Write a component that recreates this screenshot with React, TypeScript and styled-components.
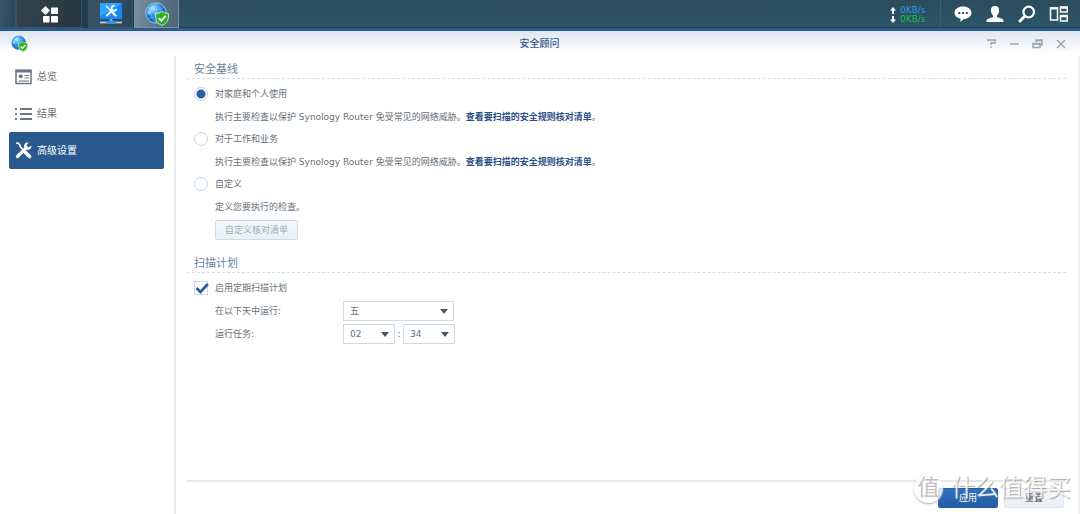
import React from "react";
import styled, { createGlobalStyle } from "styled-components";

const Global = createGlobalStyle`
  * { box-sizing: border-box; }
  body {
    margin: 0;
    background: #fff;
    color: #66707a;
    font: 9px/12px "DejaVu Sans", "Noto Sans CJK SC", sans-serif;
  }
  button, select, input { font: inherit; color: inherit; margin: 0; }
`;

const Page = styled.div`
  display: flex;
  flex-direction: column;
  min-height: 100vh;
  position: relative;
`;

const Taskbar = styled.nav`
  display: flex;
  height: 31px;
  padding: 0 11px 0 0;
  background: linear-gradient(#2b4c5c, #2c5566 90%, #1f3f52);
  border-bottom: 3px solid #2b5a90;
`;

const TaskButton = styled.button<{ $width: number; $tone?: "dark" | "active" }>`
  display: flex;
  align-items: center;
  justify-content: center;
  width: ${(p) => p.$width}px;
  height: 28px;
  padding: 1px 0 0;
  border: 1px solid ${(p) => (p.$tone === "active" ? "#7890a0" : "#3a5362")};
  border-top: 0;
  background: ${(p) =>
    p.$tone === "active"
      ? "linear-gradient(100deg, #7890a0, #5a7382 60%, #4b6575)"
      : p.$tone === "dark"
      ? "linear-gradient(100deg, #33444f, #263640)"
      : "linear-gradient(100deg, #3c5566, #27475a)"};
`;

const TaskGap = styled.span<{ $width: number }>`
  width: ${(p) => p.$width}px;
  background: #213c4b;
`;

const Spacer = styled.span`
  flex: 1;
`;

const Speed = styled.div`
  display: grid;
  grid-template-columns: 10px 28px;
  grid-template-rows: 9px 9px;
  align-content: center;
  align-items: center;
  width: 50px;
  height: 29px;
  line-height: 9px;
  font-size: 9px;
`;

const Rate = styled.span<{ $color: string }>`
  color: ${(p) => p.$color};
`;

const Tray = styled.div`
  display: flex;
  align-items: center;
  gap: 12px;
  height: 28px;
  padding-left: 12px;
  border-left: 1px solid #3a6070;
`;

const IconButton = styled.button<{ $size: number }>`
  display: flex;
  align-items: center;
  justify-content: center;
  width: ${(p) => p.$size}px;
  height: ${(p) => p.$size}px;
  padding: 0;
  border: 0;
  background: none;
`;

const TitleBar = styled.header`
  display: grid;
  grid-template-columns: 100px 1fr 100px;
  align-items: center;
  height: 25px;
  padding: 0 12px 0 11px;
  background: linear-gradient(#dfe6ef, #fff 90%);
`;

const Title = styled.h1`
  margin: 0;
  text-align: center;
  font-size: 10px;
  line-height: 14px;
  font-weight: 500;
  color: #35558a;
`;

const WindowControls = styled.div`
  display: flex;
  justify-content: flex-end;
  gap: 9px;
`;

const Body = styled.div`
  display: flex;
  flex: 1;
  border-right: 2px solid #f0f1f2;
`;

const Sidebar = styled.aside`
  display: flex;
  flex-direction: column;
  width: 176px;
  padding: 2px 10px 0 9px;
  border-right: 2px solid #e9eaeb;
`;

const NavItem = styled.button<{ $active?: boolean }>`
  display: flex;
  align-items: center;
  gap: 5px;
  height: 37px;
  padding: 0 6px;
  border: 0;
  border-radius: 2px;
  background: ${(p) => (p.$active ? "#29598f" : "none")};
  color: ${(p) => (p.$active ? "#fff" : "#66707a")};
  font-size: 10px;
  line-height: 14px;
`;

const Main = styled.main`
  display: flex;
  flex: 1;
  flex-direction: column;
  padding: 3px 12px 0 11px;
`;

const Heading = styled.h2`
  height: 20px;
  margin: 0 0 4px;
  padding-left: 7px;
  border-bottom: 1px dashed #d6dde4;
  color: #6683a0;
  font-size: 11px;
  line-height: 21px;
  font-weight: 400;
`;

const Section = styled.section`
  margin-bottom: 13px;
`;

const Option = styled.label`
  display: flex;
  align-items: center;
  gap: 7px;
  height: 22px;
  padding-left: 7px;
`;

const Radio = styled.input`
  appearance: none;
  width: 14px;
  height: 14px;
  border: 1px solid #c5d3e0;
  border-radius: 50%;
  background: #fff;
  &:checked {
    background: radial-gradient(circle, #2b5fa3 0 4px, #fff 5px);
  }
`;

const CheckWrap = styled.span`
  position: relative;
  display: flex;
  svg {
    position: absolute;
    left: 1px;
    top: 1px;
    pointer-events: none;
  }
`;

const Checkbox = styled.input`
  appearance: none;
  width: 14px;
  height: 14px;
  border: 1px solid #c9d6e4;
  background: #fff;
`;

const Description = styled.p`
  height: 23px;
  margin: 0;
  padding-left: 28px;
  line-height: 25px;
`;

const RuleLink = styled.a`
  color: #2c4f87;
  font-weight: bold;
  text-decoration: none;
`;

const Button = styled.button<{ $kind?: "primary" | "disabled" }>`
  height: 20px;
  min-width: 60px;
  padding: 0 9px;
  border: 1px solid ${(p) => (p.$kind === "primary" ? "#2562aa" : p.$kind === "disabled" ? "#cfdce8" : "#e0e6ec")};
  border-radius: 2px;
  background: ${(p) => (p.$kind === "primary" ? "linear-gradient(#2e70bd, #235ca5)" : "linear-gradient(#f5f8fb, #e9eff4)")};
  color: ${(p) => (p.$kind === "primary" ? "#fff" : p.$kind === "disabled" ? "#a3acb5" : "#414f5d")};
  line-height: 12px;
`;

const ChecklistRow = styled.div`
  padding: 2px 0 0 28px;
`;

const Field = styled.div`
  display: grid;
  grid-template-columns: 128px 1fr;
  align-items: center;
  height: 23px;
  padding-left: 28px;
`;

const Time = styled.div`
  display: flex;
  align-items: center;
`;

const Colon = styled.span`
  width: 8px;
  text-align: center;
`;

const SelectWrap = styled.span<{ $width: number }>`
  position: relative;
  width: ${(p) => p.$width}px;
  height: 20px;
  svg {
    position: absolute;
    right: 6px;
    top: 8px;
    pointer-events: none;
  }
`;

const Select = styled.select`
  appearance: none;
  display: block;
  width: 100%;
  height: 20px;
  padding: 0 6px;
  border: 1px solid #cfdae5;
  border-radius: 0;
  background: #fff;
`;

const Footer = styled.footer`
  display: flex;
  justify-content: flex-end;
  gap: 6px;
  height: 34px;
  margin-top: auto;
  padding: 6px 2px 0 0;
  border-top: 2px solid #e6e7e8;
`;

const Watermark = styled.div`
  position: absolute;
  right: 9px;
  bottom: 9px;
  display: flex;
  align-items: center;
  gap: 8px;
  color: rgba(255, 255, 255, 0.85);
  font-size: 24px;
  line-height: 34px;
  text-shadow: 1px 1px 1px rgba(110, 110, 110, 0.6);
  pointer-events: none;
`;

const WatermarkSeal = styled.span`
  width: 29px;
  height: 29px;
  border-radius: 50%;
  background: rgba(255, 255, 255, 0.8);
  box-shadow: 0 1px 2px #aaa;
  color: #c2c2c2;
  font-size: 22px;
  line-height: 28px;
  text-align: center;
  text-shadow: none;
`;

const Globe = ({ size, id }: { size: number; id: string }) => (
  <svg width={size} height={size} viewBox="0 0 24 24" aria-hidden="true">
    <defs>
      <radialGradient id={id} cx="40%" cy="30%">
        <stop offset="0" stopColor="#8ed7ff" />
        <stop offset="0.6" stopColor="#2f92ef" />
        <stop offset="1" stopColor="#176cd0" />
      </radialGradient>
    </defs>
    <circle cx="11" cy="11" r="10.3" fill={`url(#${id})`} stroke="#b9e0fa" strokeWidth="0.7" />
    <path d="M1 11h20M3 5.500q8 4 16 0M3 17q8-4 16 0M11 1v20M11 1Q1 11 11 21M11 1q10 10 0 20" fill="none" stroke="#a5dbff" strokeWidth="0.5" opacity="0.7" />
    <path d="M4 6l4-3 3 2-2 3-3 1-1 4-3-2z" fill="#bce6ff" opacity="0.6" />
    <path d="M17 9.500q3 2 6.400 2v4q-.5 5.500-6.400 8-6-2.500-6.400-8v-4q3.400 0 6.400-2z" fill="#28b51c" stroke="#e5f5df" strokeWidth="0.800" />
    <path d="M13.700 16.200l2.500 2.500 4.500-4.800" fill="none" stroke="#fff" strokeWidth="1.900" />
  </svg>
);

const Tools = ({ size }: { size: number }) => (
  <svg width={size} height={size} viewBox="0 0 17 17" aria-hidden="true">
    <path d="M2.500 14.500L11 6" stroke="#fff" strokeWidth="3.200" strokeLinecap="round" />
    <path d="M16.200 3.500l-2.700 2-2-2 2-2.800C10.500 0 8.500 2.500 9.300 5.200L11.800 7.700c2.700.8 5-1.400 4.400-4.200z" fill="#fff" />
    <path d="M1 1.500L3 1l2 2v1.500l3 3" fill="none" stroke="#fff" strokeWidth="1.700" />
    <path d="M10.500 10.500l4 4" stroke="#fff" strokeWidth="3.600" strokeLinecap="round" />
  </svg>
);

const Arrow = ({ down }: { down?: boolean }) => (
  <svg width="6" height="7" viewBox="0 0 6 7" aria-hidden="true">
    <path d={down ? "M3 7L0 3.500h2V0h2v3.500h2z" : "M3 0L0 3.500h2V7h2V3.500h2z"} fill="#fff" />
  </svg>
);

const Caret = () => (
  <svg width="8" height="5" viewBox="0 0 8 5" aria-hidden="true">
    <path d="M0 0h8L4 5z" fill="#4c5965" />
  </svg>
);

const Dropdown = ({ label, options, width }: { label: string; options: string[]; width: number }) => (
  <SelectWrap $width={width}>
    <Select aria-label={label}>
      {options.map((o) => (
        <option key={o}>{o}</option>
      ))}
    </Select>
    <Caret />
  </SelectWrap>
);

const baselines = ["对家庭和个人使用", "对于工作和业务"];

export default function App() {
  return (
    <Page>
      <Global />
      <Taskbar>
        <TaskButton $width={16} aria-label="显示桌面" />
        <TaskButton $width={66} $tone="dark" aria-label="主菜单">
          <svg width="17" height="17" viewBox="0 0 17 17" fill="#fff" aria-hidden="true">
            <path d="M4.500 0l4.500 4.500-4.500 4.500L0 4.500z" />
            <rect x="10" y="1.500" width="7" height="6.500" rx="0.700" />
            <rect x="2" y="10" width="6.500" height="6.500" rx="0.700" />
            <rect x="10" y="10" width="7" height="6.500" rx="0.700" />
          </svg>
        </TaskButton>
        <TaskGap $width={6} />
        <TaskButton $width={45} aria-label="控制面板">
          <svg width="22" height="22" viewBox="0 0 22 22" aria-hidden="true">
            <rect x="0" y="0" width="22" height="16" rx="0.500" fill="#1689f2" />
            <path d="M0 0h22L0 14z" fill="#33a4ff" />
            <g fill="none" stroke="#fff">
              <path d="M7 12.500l5.500-5.500" strokeWidth="2" strokeLinecap="round" />
              <path d="M14.500 2.800a2.500 2.500 0 1 0 2 3" strokeWidth="1.700" />
              <path d="M6 3l5 5" strokeWidth="1.200" />
              <path d="M12.500 9.500l3 3" strokeWidth="2.300" strokeLinecap="round" />
            </g>
            <path d="M11 16v3" stroke="#9aa8b2" strokeWidth="3" />
            <path d="M0 19.500h22" stroke="#c8ced2" strokeWidth="1.700" />
            <rect x="6" y="18" width="10" height="3" rx="1" fill="#2497ee" />
          </svg>
        </TaskButton>
        <TaskGap $width={1} />
        <TaskButton $width={45} $tone="active" aria-label="安全顾问">
          <Globe size={24} id="globe-task" />
        </TaskButton>
        <Spacer />
        <Speed>
          <Arrow />
          <Rate $color="#2e9be2">0KB/s</Rate>
          <Arrow down />
          <Rate $color="#20bd50">0KB/s</Rate>
        </Speed>
        <Tray>
          <IconButton $size={20} aria-label="通知">
            <svg width="18" height="18" viewBox="0 0 18 18" aria-hidden="true">
              <path d="M9 1.500c4.700 0 8.500 2.700 8.500 6.300S13.700 14 9.800 14.100L6.500 17v-3.300C3 13 .5 10.700.5 7.800.5 4.200 4.300 1.500 9 1.500z" fill="#fff" />
              <path d="M4.300 7h2v2h-2zM8 7h2v2H8zM11.700 7h2v2h-2z" fill="#315665" />
            </svg>
          </IconButton>
          <IconButton $size={20} aria-label="用户">
            <svg width="18" height="18" viewBox="0 0 18 18" aria-hidden="true">
              <path d="M9 1c3 0 4.300 2 4.100 4.500C13 8 12 9.500 11 10.500V12l5.500 2c.8.500 1 1.500 1 3H.5c0-1.500.2-2.500 1-3L7 12v-1.500C6 9.500 5 8 4.900 5.500 4.700 3 6 1 9 1z" fill="#fff" />
            </svg>
          </IconButton>
          <IconButton $size={20} aria-label="搜索">
            <svg width="18" height="18" viewBox="0 0 18 18" fill="none" stroke="#fff" aria-hidden="true">
              <circle cx="10.700" cy="7" r="5.300" strokeWidth="2.200" />
              <path d="M6.500 11.500L2 16" strokeWidth="3" strokeLinecap="round" />
            </svg>
          </IconButton>
          <IconButton $size={20} aria-label="小组件">
            <svg width="20" height="18" viewBox="0 0 20 18" fill="none" stroke="#fff" strokeWidth="1.500" aria-hidden="true">
              <path d="M1.500 3h7v12h-7zM11.500 2h6.700v5h-6.700zM11.500 10.500h6.700v5.500h-6.700z" />
              <path d="M1 3.500h8M11 2.700h8M11 11.200h8" strokeWidth="2" />
            </svg>
          </IconButton>
        </Tray>
      </Taskbar>

      <TitleBar>
        <Globe size={17} id="globe-title" />
        <Title>安全顾问</Title>
        <WindowControls>
          {[
            ["帮助", "M2 3h8v3H6v2M6 9.500v1.500"],
            ["最小化", "M2 7h9"],
            ["还原", "M5 5V3h6v5H9M5 3.500h6M2 6.500h7v4H2zM2 7h7"],
            ["关闭", "M3 3l8 8M11 3l-8 8"],
          ].map(([label, path]) => (
            <IconButton key={label} $size={14} aria-label={label}>
              <svg width="14" height="14" viewBox="0 0 14 14" fill="none" stroke="#9aa3ab" strokeWidth="1.400" aria-hidden="true">
                <path d={path} />
              </svg>
            </IconButton>
          ))}
        </WindowControls>
      </TitleBar>

      <Body>
        <Sidebar>
          <NavItem>
            <svg width="17" height="16" viewBox="0 0 17 16" fill="none" stroke="#6c7782" aria-hidden="true">
              <path d="M1 1.500h15v13H1z" strokeWidth="1.500" />
              <path d="M.5 2h16" strokeWidth="3" />
              <path d="M9.500 6.500H14M9.500 9H14M3.500 12H14" strokeWidth="1.200" />
              <circle cx="5.800" cy="7.300" r="2" fill="#6c7782" stroke="none" />
            </svg>
            总览
          </NavItem>
          <NavItem>
            <svg width="17" height="14" viewBox="0 0 17 14" stroke="#6c7782" strokeWidth="2" aria-hidden="true">
              <path d="M0 2h2M5 2h12M0 7h2M5 7h12M0 12h2M5 12h12" />
            </svg>
            结果
          </NavItem>
          <NavItem $active>
            <Tools size={17} />
            高级设置
          </NavItem>
        </Sidebar>

        <Main>
          <Section>
            <Heading>安全基线</Heading>
            {baselines.map((name, i) => (
              <React.Fragment key={name}>
                <Option>
                  <Radio type="radio" name="baseline" defaultChecked={i === 0} />
                  {name}
                </Option>
                <Description>
                  执行主要检查以保护 Synology Router 免受常见的网络威胁。
                  <RuleLink href="#rules">查看要扫描的安全规则核对清单</RuleLink>。
                </Description>
              </React.Fragment>
            ))}
            <Option>
              <Radio type="radio" name="baseline" />
              自定义
            </Option>
            <Description>定义您要执行的检查。</Description>
            <ChecklistRow>
              <Button $kind="disabled" disabled>
                自定义核对清单
              </Button>
            </ChecklistRow>
          </Section>

          <Section>
            <Heading>扫描计划</Heading>
            <Option>
              <CheckWrap>
                <Checkbox type="checkbox" defaultChecked />
                <svg width="14" height="12" viewBox="0 0 14 12" aria-hidden="true">
                  <path d="M1.500 6l4 4L12.800 2" fill="none" stroke="#2a5c9f" strokeWidth="2.600" />
                </svg>
              </CheckWrap>
              启用定期扫描计划
            </Option>
            <Field>
              <span>在以下天中运行:</span>
              <Dropdown label="在以下天中运行" options={["五"]} width={111} />
            </Field>
            <Field>
              <span>运行任务:</span>
              <Time>
                <Dropdown label="小时" options={["02"]} width={52} />
                <Colon>:</Colon>
                <Dropdown label="分钟" options={["34"]} width={52} />
              </Time>
            </Field>
          </Section>

          <Footer>
            <Button $kind="primary">应用</Button>
            <Button>重置</Button>
          </Footer>
        </Main>
      </Body>

      <Watermark>
        <WatermarkSeal>值</WatermarkSeal>
        什么值得买
      </Watermark>
    </Page>
  );
}
